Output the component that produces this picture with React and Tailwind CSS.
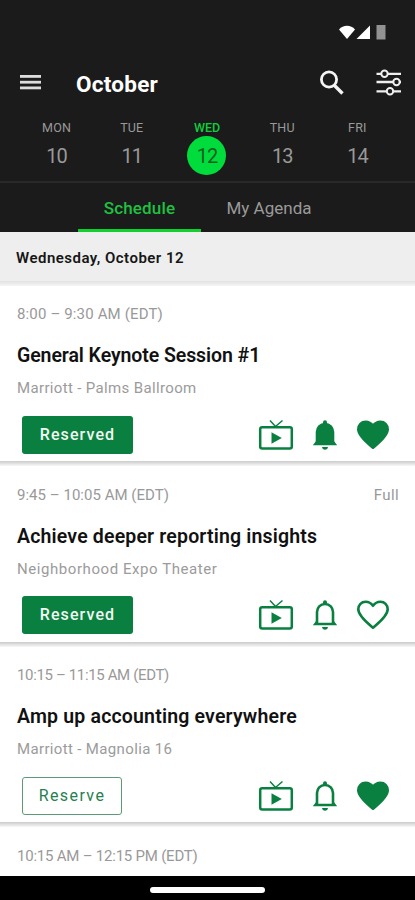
import React, { useState } from 'react';
import clsx from 'clsx';

const days = [
  { label: 'MON', date: 10 },
  { label: 'TUE', date: 11 },
  { label: 'WED', date: 12 },
  { label: 'THU', date: 13 },
  { label: 'FRI', date: 14 },
];

const sessions = [
  {
    time: '8:00 – 9:30 AM (EDT)',
    title: 'General Keynote Session #1',
    place: 'Marriott - Palms Ballroom',
    reserved: true,
    alert: true,
    liked: true,
    timeClass: 'tracking-[0.15px]',
    titleClass: 'tracking-[-0.08px]',
    placeClass: 'tracking-[0.35px]',
  },
  {
    time: '9:45 – 10:05 AM (EDT)',
    title: 'Achieve deeper reporting insights',
    place: 'Neighborhood Expo Theater',
    note: 'Full',
    reserved: true,
    timeClass: 'tracking-[0.03px]',
    titleClass: 'tracking-[0.17px]',
    placeClass: 'tracking-[0.57px]',
  },
  {
    time: '10:15 – 11:15 AM (EDT)',
    title: 'Amp up accounting everywhere',
    place: 'Marriott - Magnolia 16',
    liked: true,
    timeClass: 'tracking-[-0.36px]',
    titleClass: 'tracking-[0.18px]',
    placeClass: 'tracking-[0.35px]',
  },
  { time: '10:15 AM – 12:15 PM (EDT)', timeClass: 'tracking-[-0.22px]' },
];

const TvIcon = () => (
  <svg width="36" height="32" viewBox="0 0 36 32" fill="none">
    <rect x="2.200" y="8.200" width="31.600" height="21.300" rx="2" stroke="#0a8040" strokeWidth="2.500" />
    <path d="M12 1.500 17.500 7.500 24.500 1.500" stroke="#0a8040" strokeWidth="1.500" />
    <path d="M13.500 13.300v11.500l10.300-5.700z" fill="#0a8040" />
  </svg>
);

const BellIcon = ({ filled }) => (
  <svg width="26" height="32" viewBox="0 0 26 32" fill="none">
    <path
      d="M5 24V13c0-4.500 3.300-8 8-8s8 3.500 8 8v11"
      fill={filled ? '#0a8040' : 'none'}
      stroke="#0a8040"
      strokeWidth="2.600"
    />
    <path d="M11 5V3.200a2 2 0 0 1 4 0V5z" fill="#0a8040" />
    <path d="M.8 26.200 4.500 21.500V23.700h17v-2.200l3.700 4.700z" fill="#0a8040" />
    <path d="M10 28h6c-.3 1.700-1.400 2.800-3 2.800S10.300 29.700 10 28z" fill="#0a8040" />
  </svg>
);

const HeartIcon = ({ filled }) => (
  <svg width="34" height="32" viewBox="0 0 34 32" fill="none">
    <path
      d="M17 28.700C12 24.500 2.300 17.200 2.300 10.300c0-4.400 3.200-7.500 7.300-7.500 3 0 5.500 1.400 7.400 4 1.900-2.600 4.400-4 7.400-4 4.100 0 7.300 3.100 7.300 7.500C31.700 17.200 22 24.500 17 28.700z"
      fill={filled ? '#0a8040' : 'none'}
      stroke="#0a8040"
      strokeWidth="2.600"
      strokeLinejoin="round"
    />
  </svg>
);

const StatusBar = () => (
  <div className="flex h-[60px] items-end justify-end pr-[29px] pb-5">
    <svg width="47" height="15" viewBox="0 0 47 15">
      <path d="M0 4.500C4-.5 12-.5 16 4.500L8 14z" fill="#fff" />
      <path d="M17.500 14 31 0.500V14z" fill="#fff" />
      <rect x="37.500" y="0" width="9" height="14.500" fill="#929292" />
    </svg>
  </div>
);

const SessionCard = ({ session, first }) => (
  <article className="h-[180.5px] shrink-0 bg-white">
    <div
      className={clsx(
        'h-[5px] bg-linear-to-b',
        first ? 'from-[#e2e2e2] to-[#f5f5f5]' : 'from-[#cbcbcb] to-[#f8f8f8]'
      )}
    />
    <div className="pt-[18.5px] pr-4 pl-[17px]">
      <div className="flex justify-between text-[15px] leading-5 text-[#999]">
        <span className={session.timeClass}>{session.time}</span>
        <span className="tracking-[0.4px]">{session.note}</span>
      </div>
      {session.title && (
        <>
          <h2
            className={clsx(
              'mt-5 text-[19.5px] leading-6 font-semibold whitespace-nowrap text-[#111]',
              session.titleClass
            )}
          >
            {session.title}
          </h2>
          <p className={clsx('mt-2.5 text-[15px] leading-5 text-[#9b9b9b]', session.placeClass)}>
            {session.place}
          </p>
          <div className="mt-[17.5px] flex items-center justify-between pr-[9px] pl-[5px]">
            <button
              className={clsx(
                'h-[38px] rounded-[3px] text-base',
                session.reserved
                  ? 'w-[111px] bg-[#0a8040] font-medium tracking-[1.1px] text-[#f2f8f2]'
                  : 'w-[100px] border border-[#5a9a76] tracking-[1.4px] text-[#27804f]'
              )}
            >
              {session.reserved ? 'Reserved' : 'Reserve'}
            </button>
            <div className="flex items-center gap-[18px]">
              <TvIcon />
              <BellIcon filled={session.alert} />
              <HeartIcon filled={session.liked} />
            </div>
          </div>
        </>
      )}
    </div>
  </article>
);

export default function App() {
  const [selected, setSelected] = useState(12);

  return (
    <div className="flex h-[900px] w-[415px] flex-col overflow-hidden bg-white font-['Roboto',sans-serif]">
      {/* Header */}
      <header className="h-[181px] shrink-0 bg-[#1b1b1b]">
        <StatusBar />
        <div className="flex h-[46px] items-center pr-[13px] pl-5">
          <svg width="21" height="16" viewBox="0 0 21 16" fill="#ddd">
            <rect y="0" width="21" height="2.800" />
            <rect y="5.800" width="21" height="2.800" />
            <rect y="11.500" width="21" height="2.800" />
          </svg>
          <h1 className="ml-[35px] pt-px text-[22.5px] leading-7 font-bold tracking-[0.25px] text-white">October</h1>
          <div className="ml-auto flex items-center gap-[31px]">
            <svg width="26" height="26" viewBox="0 0 26 26" fill="none" stroke="#f4f4f4">
              <circle cx="10" cy="9.500" r="7.600" strokeWidth="2.800" />
              <path d="M15 15 23.500 23.500" strokeWidth="3.400" />
            </svg>
            <svg width="26" height="28" viewBox="0 0 26 28" fill="#1b1b1b" stroke="#f0f0f0" strokeWidth="2">
              <path d="M.5 4.800h24.500M.5 13h24.500M.5 22.300h24.500" strokeWidth="2.300" />
              <circle cx="8.500" cy="4.800" r="3.200" />
              <circle cx="20.500" cy="13" r="3.200" />
              <circle cx="14" cy="22.300" r="3.200" />
            </svg>
          </div>
        </div>
        <div className="grid grid-cols-5 pt-3.5 pr-5 pl-[19px]">
          {days.map((day) => (
            <button
              key={day.date}
              onClick={() => setSelected(day.date)}
              className="flex flex-col items-center"
            >
              <span
                className={clsx(
                  'text-[12.5px] leading-4',
                  selected === day.date ? 'font-medium text-[#10cd3c]' : 'tracking-[0.2px] text-[#999]'
                )}
              >
                {day.label}
              </span>
              <span
                className={clsx(
                  'flex size-[39px] items-center justify-center rounded-full text-[20px] tracking-[-1px]',
                  selected === day.date ? 'bg-[#00dc3c] text-[#0b5f20]' : 'text-[#999]'
                )}
              >
                {day.date}
              </span>
            </button>
          ))}
        </div>
      </header>

      {/* Tabs */}
      <nav className="flex h-[51px] shrink-0 border-t-2 border-[#292929] bg-[#1b1b1b] pl-[78px] text-[17px]">
        <button className="w-[123px] border-b-[3px] border-[#0fd02f] pt-1.5 font-medium tracking-[0.15px] text-[#1fc141]">
          Schedule
        </button>
        <button className="w-[136px] border-b-[3px] border-transparent pt-1.5 text-[#9a9a9a]">My Agenda</button>
      </nav>

      {/* Selected date */}
      <div className="h-[48.5px] shrink-0 bg-[#eee] pt-4 pl-4 text-[15px] leading-5 font-semibold tracking-[0.48px] text-[#161616]">
        Wednesday, October 12
      </div>

      {/* Sessions */}
      <main className="flex min-h-0 flex-1 flex-col overflow-hidden">
        {sessions.map((session, index) => (
          <SessionCard key={session.time} session={session} first={index === 0} />
        ))}
      </main>

      {/* Gesture bar */}
      <footer className="flex h-6 shrink-0 justify-center bg-black pt-[11px]">
        <div className="h-[6px] w-[115px] rounded-full bg-white" />
      </footer>
    </div>
  );
}
